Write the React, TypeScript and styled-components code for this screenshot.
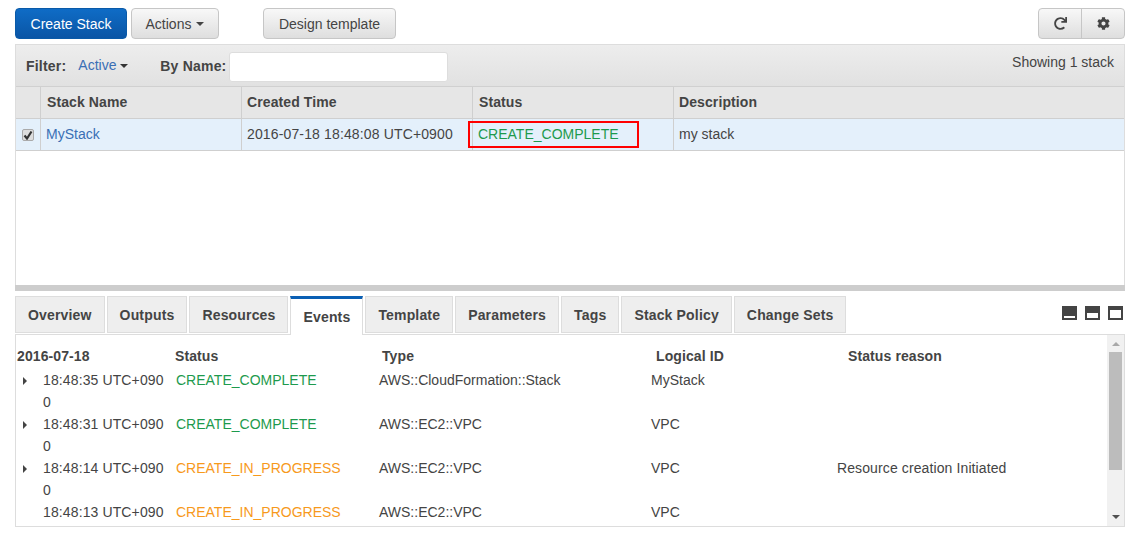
import styled, { createGlobalStyle } from "styled-components";
import { FaCog, FaRedo } from "react-icons/fa";

const GlobalStyle = createGlobalStyle`
  html, body {
    margin: 0;
    padding: 0;
    background: #fff;
    height: 541px;
    overflow: hidden;
    font-family: "Liberation Sans", Arial, sans-serif;
    font-size: 14px;
    color: #444;
  }
`;

const Page = styled.div`
  width: 1110px;
  padding: 8px 15px 0;
`;

const Toolbar = styled.div`
  display: flex;
  align-items: stretch;
  height: 31px;
  margin-bottom: 5px;
`;

const Button = styled.button<{ $gap?: number; $width: number }>`
  box-sizing: border-box;
  width: ${(props) => props.$width}px;
  height: 31px;
  padding: 0;
  margin-right: ${(props) => props.$gap ?? 4}px;
  border: 1px solid #c6c6c6;
  border-radius: 4px;
  background: linear-gradient(#f8f8f8, #dedede);
  color: #444;
  font: 14px "Liberation Sans", Arial, sans-serif;
  display: flex;
  align-items: center;
  justify-content: center;
  gap: 5px;
`;

const PrimaryButton = styled(Button)`
  border: 1px solid #0a5aa8;
  background: linear-gradient(#0f6cc6, #0a55a5);
  color: #fff;
`;

const ToolGroup = styled.div`
  margin-left: auto;
  display: flex;
  box-sizing: border-box;
  width: 87px;
  height: 31px;
  border: 1px solid #c6c6c6;
  border-radius: 4px;
  background: linear-gradient(#f8f8f8, #dedede);
`;

const ToolCell = styled.div`
  flex: 1;
  display: flex;
  align-items: center;
  justify-content: center;
  color: #444;
  font-size: 13px;
  & + & {
    border-left: 1px solid #c6c6c6;
  }
`;

const Caret = styled.span<{ $color?: string }>`
  display: inline-block;
  width: 0;
  height: 0;
  margin-top: 1px;
  border-left: 4px solid transparent;
  border-right: 4px solid transparent;
  border-top: 4px solid ${(props) => props.$color ?? "#444"};
`;

const StackPanel = styled.div`
  position: relative;
  box-sizing: border-box;
  height: 241px;
  border: 1px solid #ddd;
  border-bottom: 0;
`;

const FilterBar = styled.div`
  box-sizing: border-box;
  height: 42px;
  padding: 7px 10px 0 10px;
  display: flex;
  background: linear-gradient(#ededed, #e1e1e1);
  border-bottom: 1px solid #d0d0d0;
`;

const FilterLabel = styled.b<{ $gap: number }>`
  margin-top: 6px;
  margin-right: ${(props) => props.$gap}px;
  letter-spacing: 0.2px;
`;

const FilterValue = styled.span`
  margin-top: 5px;
  margin-right: 32px;
  width: 50px;
  color: #3a6fb5;
  display: flex;
  align-items: flex-start;
  gap: 4px;
  height: 17px;
  line-height: 17px;
  white-space: nowrap;
`;

const FilterCaret = styled(Caret)`
  margin-top: 7px;
`;

const NameInput = styled.div`
  box-sizing: border-box;
  width: 219px;
  height: 30px;
  background: #fff;
  border: 1px solid #ddd;
  border-radius: 3px;
`;

const ShowCount = styled.span`
  margin-left: auto;
  margin-top: 2px;
`;

const StackRow = styled.div<{ $kind: "head" | "selected" }>`
  box-sizing: border-box;
  display: grid;
  grid-template-columns: 24px 201px 231px 201px 1fr;
  height: 32px;
  background: ${(props) => (props.$kind === "head" ? "#e6e6e6" : "#e4f0fb")};
  border-bottom: 1px solid #cfcfcf;
  font-weight: ${(props) => (props.$kind === "head" ? "bold" : "normal")};
  letter-spacing: ${(props) => (props.$kind === "head" ? "0.1px" : "0")};
`;

const StackCell = styled.div<{ $tone?: string; $inset?: number }>`
  display: flex;
  align-items: center;
  padding: 0 0 2px ${(props) => props.$inset ?? 5}px;
  color: ${(props) => props.$tone ?? "#444"};
  border-left: 1px solid #cfcfcf;
  white-space: nowrap;
`;

const CheckCell = styled.div`
  display: flex;
  align-items: center;
  padding-left: 6px;
`;

const CheckBox = styled.span`
  box-sizing: border-box;
  width: 12px;
  height: 12px;
  border: 1px solid #aaa;
  border-radius: 2px;
  background: #ddd;
  display: flex;
  align-items: center;
  justify-content: center;
`;

const DateText = styled.span`
  letter-spacing: 0.14px;
`;

const Highlight = styled.div`
  position: absolute;
  left: 452px;
  top: 76px;
  width: 171px;
  height: 27px;
  box-sizing: border-box;
  border: 2px solid #f00;
  pointer-events: none;
`;

const Splitter = styled.div`
  height: 6px;
  background: #cdcdcd;
  margin-bottom: 5px;
`;

const TabBar = styled.div`
  display: flex;
  align-items: flex-start;
  height: 38px;
  gap: 2px;
`;

const Tab = styled.div<{ $active?: boolean }>`
  box-sizing: border-box;
  height: ${(props) => (props.$active ? "39px" : "37px")};
  padding: 0 12px;
  display: flex;
  align-items: center;
  font-weight: bold;
  letter-spacing: 0.165px;
  color: #444;
  position: relative;
  z-index: ${(props) => (props.$active ? 1 : 0)};
  background: ${(props) => (props.$active ? "#fff" : "#eee")};
  border: 1px solid #ddd;
  border-bottom: ${(props) => (props.$active ? "0" : "1px solid #ddd")};
  border-top: ${(props) => (props.$active ? "3px solid #0a5fb4" : "1px solid #ddd")};
`;

const PaneIcons = styled.div`
  margin-left: auto;
  display: flex;
  gap: 8px;
  padding: 10px 2px 0 0;
`;

const EventsPanel = styled.div`
  box-sizing: border-box;
  height: 193px;
  border: 1px solid #ddd;
  display: flex;
  overflow: hidden;
`;

const EventsBody = styled.div`
  flex: 1;
  min-width: 0;
  overflow: hidden;
`;

const EventsHead = styled.div`
  display: grid;
  grid-template-columns: 158px 207px 274px 192px 1fr;
  height: 34px;
  padding: 13px 0 0 1px;
  box-sizing: border-box;
  font-weight: bold;
  letter-spacing: 0.1px;
  line-height: 16px;
`;

const EventRow = styled.div`
  display: grid;
  grid-template-columns: 27px 122px 11px 203px 272px 186px 1fr;
  height: 44px;
  line-height: 22px;
`;

const RowToggle = styled.span`
  display: flex;
  padding: 8px 0 0 7px;
`;

const Arrow = styled.span`
  width: 0;
  height: 0;
  border-top: 4px solid transparent;
  border-bottom: 4px solid transparent;
  border-left: 4px solid #444;
`;

const TimeCell = styled.span`
  word-break: break-all;
  letter-spacing: 0.12px;
`;

const StatusText = styled.span<{ $state: "done" | "busy" }>`
  color: ${(props) => (props.$state === "done" ? "#1d9a4d" : "#f7991c")};
  white-space: nowrap;
`;

const ReasonText = styled.span`
  letter-spacing: 0.11px;
`;

const ScrollTrack = styled.div`
  width: 17px;
  flex: none;
  background: #f1f1f1;
  display: flex;
  flex-direction: column;
  align-items: center;
`;

const ScrollThumb = styled.div`
  width: 13px;
  height: 118px;
  background: #bcbcbc;
`;

const ScrollArrow = styled.div<{ $dir: "up" | "down" }>`
  width: 0;
  height: 0;
  margin: ${(props) => (props.$dir === "up" ? "7px 0 6px" : "auto 0 7px")};
  border-left: 4px solid transparent;
  border-right: 4px solid transparent;
  ${(props) =>
    props.$dir === "up"
      ? "border-bottom: 4px solid #a8a8a8;"
      : "border-top: 4px solid #505050;"}
`;

const events = [
  { time: "18:48:35 UTC+0900", status: "CREATE_COMPLETE", type: "AWS::CloudFormation::Stack", id: "MyStack", reason: "", open: true },
  { time: "18:48:31 UTC+0900", status: "CREATE_COMPLETE", type: "AWS::EC2::VPC", id: "VPC", reason: "", open: true },
  { time: "18:48:14 UTC+0900", status: "CREATE_IN_PROGRESS", type: "AWS::EC2::VPC", id: "VPC", reason: "Resource creation Initiated", open: true },
  { time: "18:48:13 UTC+0900", status: "CREATE_IN_PROGRESS", type: "AWS::EC2::VPC", id: "VPC", reason: "", open: false },
];

const tabs = ["Overview", "Outputs", "Resources", "Events", "Template", "Parameters", "Tags", "Stack Policy", "Change Sets"];

function PaneIcon({ top, bottom }: { top: number; bottom: number }) {
  // dark square with a white window, the window grows with the pane size
  return (
    <svg width="15" height="14" viewBox="0 0 15 14">
      <rect width="15" height="14" fill="#444" />
      <rect x="2" y={top} width="11" height={bottom} fill="#fff" />
    </svg>
  );
}

export default function App() {
  return (
    <Page>
      <GlobalStyle />
      <Toolbar>
        <PrimaryButton $width={112}>Create Stack</PrimaryButton>
        <Button $width={88} $gap={44}>
          Actions <Caret />
        </Button>
        <Button $width={133}>Design template</Button>
        <ToolGroup>
          <ToolCell>
            <FaRedo />
          </ToolCell>
          <ToolCell>
            <FaCog />
          </ToolCell>
        </ToolGroup>
      </Toolbar>

      <StackPanel>
        <FilterBar>
          <FilterLabel $gap={12}>Filter:</FilterLabel>
          <FilterValue>
            Active <FilterCaret $color="#333" />
          </FilterValue>
          <FilterLabel $gap={3}>By Name:</FilterLabel>
          <NameInput />
          <ShowCount>Showing 1 stack</ShowCount>
        </FilterBar>
        <StackRow $kind="head">
          <CheckCell />
          <StackCell $inset={6}>Stack Name</StackCell>
          <StackCell>Created Time</StackCell>
          <StackCell $inset={6}>Status</StackCell>
          <StackCell>Description</StackCell>
        </StackRow>
        <StackRow $kind="selected">
          <CheckCell>
            <CheckBox>
              <svg width="10" height="10" viewBox="0 0 10 10">
                <path d="M1.5 5.5l2.5 3L8.5 1.5" fill="none" stroke="#333" strokeWidth="2.2" />
              </svg>
            </CheckBox>
          </CheckCell>
          <StackCell $tone="#3a6fb5">MyStack</StackCell>
          <StackCell>
            <DateText>2016-07-18 18:48:08 UTC+0900</DateText>
          </StackCell>
          <StackCell $tone="#1d9a4d">CREATE_COMPLETE</StackCell>
          <StackCell>my stack</StackCell>
        </StackRow>
        <Highlight />
      </StackPanel>
      <Splitter />

      <TabBar>
        {tabs.map((tab) => (
          <Tab key={tab} $active={tab === "Events"}>
            {tab}
          </Tab>
        ))}
        <PaneIcons>
          <PaneIcon top={10} bottom={2} />
          <PaneIcon top={7} bottom={5} />
          <PaneIcon top={4} bottom={8} />
        </PaneIcons>
      </TabBar>

      <EventsPanel>
        <EventsBody>
          <EventsHead>
            <span>2016-07-18</span>
            <span>Status</span>
            <span>Type</span>
            <span>Logical ID</span>
            <span>Status reason</span>
          </EventsHead>
          {events.map((event) => (
            <EventRow key={event.time}>
              <RowToggle>{event.open && <Arrow />}</RowToggle>
              <TimeCell>{event.time}</TimeCell>
              <span />
              <StatusText $state={event.status === "CREATE_COMPLETE" ? "done" : "busy"}>
                {event.status}
              </StatusText>
              <span>{event.type}</span>
              <span>{event.id}</span>
              <ReasonText>{event.reason}</ReasonText>
            </EventRow>
          ))}
        </EventsBody>
        <ScrollTrack>
          <ScrollArrow $dir="up" />
          <ScrollThumb />
          <ScrollArrow $dir="down" />
        </ScrollTrack>
      </EventsPanel>
    </Page>
  );
}
